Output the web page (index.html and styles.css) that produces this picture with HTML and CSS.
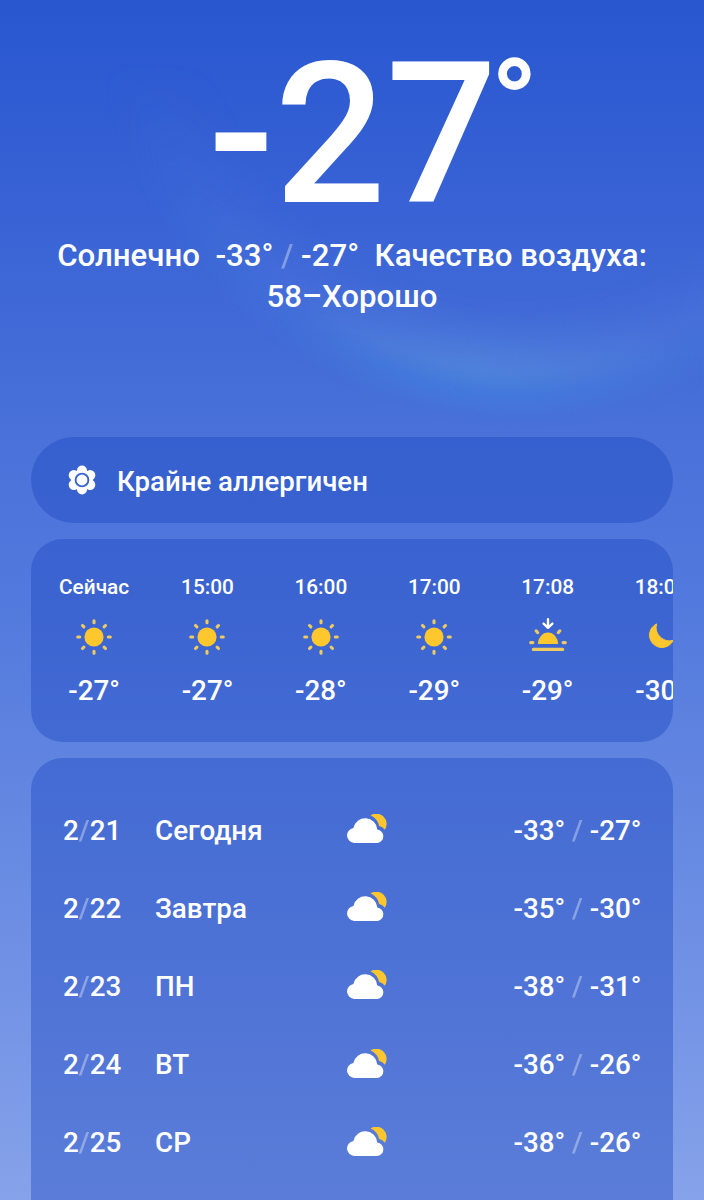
FILE: index.html
```
<!DOCTYPE html>
<html lang="ru">

<head>
    <meta charset="UTF-8">
    <meta name="viewport" content="width=device-width, initial-scale=1.0">
    <title>Погода</title>
    <link rel="stylesheet" href="styles.css">
</head>

<body>
    <!-- Shared weather icons -->
    <svg class="sprite" aria-hidden="true">
        <symbol id="sun" viewBox="0 0 40 40">
            <circle cx="20" cy="20" r="9.6" fill="#fec72e"/>
            <g stroke="#eecb62" stroke-width="3.1" stroke-linecap="round">
                <path d="M20 3.7v2M20 34.3v2M3.7 20h2M34.3 20h2M8.5 8.5l1.4 1.4M30.1 30.1l1.4 1.4M8.5 31.5l1.4-1.4M30.1 9.9l1.4-1.4"/>
            </g>
        </symbol>
        <symbol id="sunset" viewBox="0 0 40 40">
            <path d="M9.9 27a10.1 11.4 0 0 1 20.2 0z" fill="#fec72e"/>
            <g fill="none" stroke="#eecb62" stroke-width="3.1" stroke-linecap="round">
                <path d="M2.7 25.6h2.2M35.1 25.6h2.2M8.1 13.8l1.7 1.9M31.9 13.8l-1.7 1.9M5.3 32.4h29.4"/>
            </g>
            <path d="M20 2.3v8M15.6 6.6l4.4 4.2 4.4-4.2" fill="none" stroke="#fff" stroke-width="2.4" stroke-linecap="round" stroke-linejoin="round"/>
        </symbol>
        <symbol id="moon" viewBox="0 0 40 40">
            <path d="M15.6 6.9A12.4 12.4 0 1 0 32.2 23.3A13.4 13.4 0 0 1 15.6 6.9z" fill="#fec72e" stroke="#fec72e" stroke-width="1" stroke-linejoin="round"/>
        </symbol>
        <symbol id="cloud" viewBox="0 0 42 30">
            <path d="M24.6 1.4A10.3 10.3 0 0 1 38.8 15.8A9.5 9.5 0 0 0 33.1 12A14.6 14.6 0 0 0 24.6 1.4z" fill="#fdc62f"/>
            <path d="M8.3 29A7.6 7.6 0 0 1 7.4 13.9A12.1 12.1 0 0 1 31.3 15.5A6.8 6.8 0 0 1 31.4 29z" fill="#fff"/>
        </symbol>
    </svg>

    <div class="weather">
        <header class="current">
            <h1 class="current-temp">-27<span class="degree">°</span></h1>
            <p class="summary">Солнечно&nbsp; -33° <span class="slash">/</span> -27°&nbsp; Качество воздуха:<br>58–Хорошо</p>
        </header>

        <section class="card allergy">
            <svg class="flower" viewBox="0 0 30 30">
                <g fill="#fff">
                    <circle cx="15" cy="5.6" r="5"/>
                    <circle cx="23.1" cy="10.3" r="5.2"/>
                    <circle cx="23.1" cy="19.7" r="5.2"/>
                    <circle cx="15" cy="24.4" r="5"/>
                    <circle cx="6.9" cy="19.7" r="5.2"/>
                    <circle cx="6.9" cy="10.3" r="5.2"/>
                    <circle cx="15" cy="15" r="10.6"/>
                </g>
                <circle cx="15" cy="15" r="6.4" fill="none" stroke="#3a63d1" stroke-width="1.9"/>
            </svg>
            <span>Крайне аллергичен</span>
        </section>

        <section class="card hourly">
            <div class="hour">
                <span class="hour-time">Сейчас</span>
                <svg class="hour-icon"><use href="#sun"/></svg>
                <span class="hour-temp">-27°</span>
            </div>
            <div class="hour">
                <span class="hour-time">15:00</span>
                <svg class="hour-icon"><use href="#sun"/></svg>
                <span class="hour-temp">-27°</span>
            </div>
            <div class="hour">
                <span class="hour-time">16:00</span>
                <svg class="hour-icon"><use href="#sun"/></svg>
                <span class="hour-temp">-28°</span>
            </div>
            <div class="hour">
                <span class="hour-time">17:00</span>
                <svg class="hour-icon"><use href="#sun"/></svg>
                <span class="hour-temp">-29°</span>
            </div>
            <div class="hour">
                <span class="hour-time">17:08</span>
                <svg class="hour-icon"><use href="#sunset"/></svg>
                <span class="hour-temp">-29°</span>
            </div>
            <div class="hour">
                <span class="hour-time">18:00</span>
                <svg class="hour-icon"><use href="#moon"/></svg>
                <span class="hour-temp">-30°</span>
            </div>
        </section>

        <section class="card daily">
            <div class="day">
                <span>2<span class="slash">/</span>21</span>
                <span>Сегодня</span>
                <svg class="day-icon"><use href="#cloud"/></svg>
                <span class="range">-33° <span class="slash">/</span> -27°</span>
            </div>
            <div class="day">
                <span>2<span class="slash">/</span>22</span>
                <span>Завтра</span>
                <svg class="day-icon"><use href="#cloud"/></svg>
                <span class="range">-35° <span class="slash">/</span> -30°</span>
            </div>
            <div class="day">
                <span>2<span class="slash">/</span>23</span>
                <span>ПН</span>
                <svg class="day-icon"><use href="#cloud"/></svg>
                <span class="range">-38° <span class="slash">/</span> -31°</span>
            </div>
            <div class="day">
                <span>2<span class="slash">/</span>24</span>
                <span>ВТ</span>
                <svg class="day-icon"><use href="#cloud"/></svg>
                <span class="range">-36° <span class="slash">/</span> -26°</span>
            </div>
            <div class="day">
                <span>2<span class="slash">/</span>25</span>
                <span>СР</span>
                <svg class="day-icon"><use href="#cloud"/></svg>
                <span class="range">-38° <span class="slash">/</span> -26°</span>
            </div>
        </section>
    </div>
</body>

</html>
```

FILE: styles.css
```
* {
    box-sizing: border-box;
}

body {
    margin: 0;
    font-family: Roboto, sans-serif;
    font-weight: 500;
    color: #fff;
}

.sprite {
    display: none;
}

.weather {
    position: relative;
    display: flex;
    flex-direction: column;
    gap: 16px;
    height: 1200px;
    padding: 0 31px;
    overflow: hidden;
    background: linear-gradient(180deg, #2857d0 0, #3862d5 200px, #4971d9 430px, #5279dd 600px, #6387e1 800px, #7393e5 1000px, #86a2e9 1200px);
}

/* Faint halo behind the current temperature */
.weather::before,
.weather::after {
    content: "";
    position: absolute;
    top: 0;
    left: 0;
    width: 704px;
    height: 437px;
}

.weather::before {
    background: radial-gradient(ellipse 425px 415px at 520px 0, transparent 72%, rgba(110, 150, 235, 0.16) 87%, rgba(80, 145, 230, 0.14) 93%, transparent 101%);
    -webkit-mask-image: linear-gradient(180deg, transparent 60px, #000 360px);
    mask-image: linear-gradient(180deg, transparent 60px, #000 360px);
}

.weather::after {
    background: radial-gradient(ellipse 430px 425px at 530px -5px, transparent 74%, rgba(90, 160, 220, 0.36) 89%, rgba(60, 140, 225, 0.32) 94%, transparent 102%);
    -webkit-mask-image: radial-gradient(ellipse 230px 120px at 475px 380px, #000, transparent);
    mask-image: radial-gradient(ellipse 230px 120px at 475px 380px, #000, transparent);
}

.current,
.card {
    position: relative;
    z-index: 1;
    flex-shrink: 0;
}

.current {
    height: 421px;
    padding-top: 37px;
    text-align: center;
}

.current-temp {
    position: relative;
    width: 288px;
    margin: 0 auto;
    font-size: 196px;
    line-height: 196px;
    font-weight: 500;
    white-space: nowrap;
}

.degree {
    position: absolute;
    top: 6px;
    left: 282.5px;
    font-size: 123px;
    line-height: 123px;
    font-weight: 700;
}

.summary {
    margin: 2px 0 0;
    font-size: 31.2px;
    line-height: 41px;
    white-space: nowrap;
}

.slash {
    opacity: 0.35;
}

.card {
    width: 641.5px;
    border-radius: 32px;
    background-color: rgba(28, 70, 192, 0.4);
}

.allergy {
    display: flex;
    align-items: center;
    gap: 20px;
    height: 86px;
    padding: 3px 36px 0;
    border-radius: 43px;
    font-size: 27.6px;
}

.flower {
    width: 30px;
    height: 30px;
    margin-top: -4px;
}

.hourly {
    display: flex;
    height: 203px;
    padding: 34px 0 0 6.4px;
    overflow: hidden;
}

.hour {
    display: flex;
    flex: 0 0 113.4px;
    flex-direction: column;
    align-items: center;
}

.hour-time {
    font-size: 20.8px;
    line-height: 28px;
}

.hour-icon {
    width: 40px;
    height: 40px;
    margin: 16px 0;
}

.hour-temp {
    font-size: 27.8px;
    line-height: 36px;
}

.daily {
    height: 480px;
    padding: 33px 31px 0 32px;
}

.day {
    display: grid;
    grid-template-columns: 92px 190.5px 44px 1fr;
    align-items: center;
    height: 78.2px;
    font-size: 27.8px;
}

.day-icon {
    width: 42px;
    height: 30px;
    margin-top: -2px;
}

.range {
    text-align: right;
}
```
